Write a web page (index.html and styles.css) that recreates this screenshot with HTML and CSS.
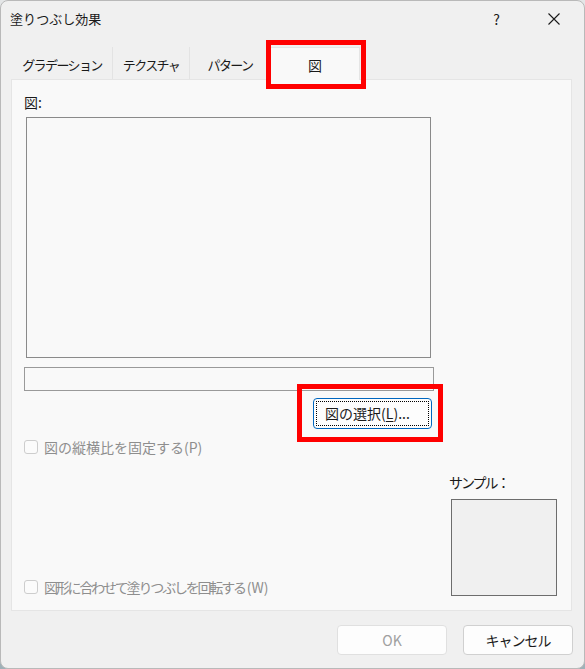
FILE: index.html
```html
<!DOCTYPE html>
<html>
  <head>
    <meta charset="utf-8">
    <link rel="stylesheet" href="styles.css">
  </head>
  <body>
    <div class="window">
      <div class="titlebar">
        <span class="title">塗りつぶし効果</span>
        <span class="help">?</span>
        <svg class="close" width="14" height="14" viewBox="0 0 14 14">
          <path d="M1.5 1.5 L12.5 12.5 M12.5 1.5 L1.5 12.5" stroke="#1a1a1a" stroke-width="1.1" fill="none"/>
        </svg>
      </div>

      <ul class="tabs">
        <li class="tab tab-grad">グラデーション</li>
        <li class="tab tab-tex">テクスチャ</li>
        <li class="tab tab-pat">パターン</li>
        <li class="tab tab-pic selected">図</li>
      </ul>

      <div class="panel">
        <div class="label">図:</div>
        <div class="picture-box"></div>
        <div class="path-field"></div>
        <div class="pick-row">
          <button class="btn pick-btn"><span class="focus-ring">図の選択(<u>L</u>)...</span></button>
        </div>
        <label class="check disabled">
          <span class="check-box"></span>
          <span class="check-text">図の縦横比を固定する(P)</span>
        </label>
        <div class="bottom-row">
          <label class="check disabled rotate">
            <span class="check-box"></span>
            <span class="check-text"><span class="tight">図形に合わせて塗りつぶしを回転する</span>(W)</span>
          </label>
          <div class="sample">
            <div class="sample-label">サンプル：</div>
            <div class="sample-box"></div>
          </div>
        </div>
      </div>

      <div class="footer">
        <button class="btn footer-btn ok" disabled>OK</button>
        <button class="btn footer-btn">キャンセル</button>
      </div>
    </div>
  </body>
</html>
```

FILE: styles.css
```css
* {
  margin: 0;
  padding: 0;
  box-sizing: border-box;
}

body {
  width: 585px;
  height: 669px;
  background: linear-gradient(#e4e6e7, #9fb1b8);
  font-family: "Noto Sans CJK JP", "Noto Sans", sans-serif;
  color: #1a1a1a;
  overflow: hidden;
}

.window {
  width: 585px;
  height: 669px;
  background: #f0f0f0;
  border: 1px solid #b9b9b9;
  border-radius: 8px;
}

.titlebar {
  display: flex;
  align-items: center;
  height: 36px;
  padding-left: 9px;
}

.title {
  font-size: 13px;
  line-height: 18px;
  flex: 1;
}

.help {
  font-size: 14px;
  line-height: 18px;
  margin-right: 47px;
}

.close {
  margin-right: 23px;
}

.tabs {
  list-style: none;
  display: flex;
  margin: 10px 0 0 11px;
  height: 32px;
}

.tab {
  position: relative;
  font-size: 13px;
  line-height: 29px;
  padding-top: 3px;
  letter-spacing: -1.6px;
  text-align: center;
  border-right: 1px solid #e3e3e3;
}

.tab-grad { width: 101px; }
.tab-tex { width: 77px; }
.tab-pat { width: 80px; border-right: none; }

.tab-pic {
  width: 90px;
  letter-spacing: 0;
  font-size: 14px;
}

.tab.selected {
  background: #f9f9f9;
  border: 1px solid #e5e5e5;
  border-bottom: none;
  height: 33px;
  z-index: 2;
}

.tab.selected::after {
  content: "";
  position: absolute;
  left: -5px;
  right: -7px;
  top: -8px;
  bottom: -9px;
  border: 5px solid #ff0000;
}

.panel {
  position: relative;
  margin-left: 10px;
  width: 561px;
  height: 532px;
  background: #f9f9f9;
  border: 1px solid #e5e5e5;
  padding: 12px 0 0 12px;
}

.label {
  font-size: 14px;
  line-height: 20px;
}

.picture-box {
  margin: 5px 0 0 2px;
  width: 405px;
  height: 241px;
  border: 1px solid #8a8a8a;
}

.path-field {
  margin-top: 9px;
  width: 410px;
  height: 24px;
  border: 1px solid #9a9a9a;
}

.pick-row {
  margin-top: 7px;
  padding-left: 289px;
}

.btn {
  font-family: "Noto Sans CJK JP", "Noto Sans", sans-serif;
  font-size: 14px;
  color: #1a1a1a;
  background: #fdfdfd;
  border: 1px solid #d0d0d0;
  border-radius: 4px;
}

.pick-btn {
  position: relative;
  width: 119px;
  height: 31px;
  border-color: #0067c0;
  padding: 2px;
}

.pick-btn::after {
  content: "";
  position: absolute;
  left: -17px;
  right: -12px;
  top: -15px;
  bottom: -14px;
  border: 5px solid #ff0000;
}

.focus-ring {
  display: block;
  height: 100%;
  border: 1px dotted #000;
  line-height: 23px;
  padding-right: 10px;
}

.pick-btn u {
  text-underline-offset: 2px;
}

.check {
  display: flex;
  align-items: center;
  height: 20px;
  font-size: 14px;
}

.check.disabled {
  color: #8e8e8e;
}

.check-box {
  width: 14px;
  height: 14px;
  border: 1px solid #cdcdcd;
  border-radius: 3px;
  background: #fbfbfb;
  margin-right: 6px;
}

.panel > .check {
  margin-top: 8px;
}

.bottom-row {
  display: flex;
  justify-content: space-between;
  align-items: flex-end;
  margin-top: 15px;
  padding-right: 14px;
}

.rotate {
  margin-bottom: -1px;
}

.tight {
  letter-spacing: -2.2px;
  margin-right: 2px;
}

.sample {
  width: 108px;
}

.sample-label {
  font-size: 14px;
  line-height: 20px;
  letter-spacing: -2px;
}

.sample-box {
  margin: 7px 0 0 2px;
  width: 106px;
  height: 97px;
  background: #f0f0f0;
  border: 1px solid #6d6d6d;
}

.footer {
  display: flex;
  justify-content: flex-end;
  gap: 16px;
  margin-top: 14px;
  padding-right: 11px;
}

.footer-btn {
  width: 110px;
  height: 30px;
  letter-spacing: -1px;
}

.footer-btn.ok {
  color: #a0a0a0;
  border-color: #e0e0e0;
  letter-spacing: 0;
}
```
